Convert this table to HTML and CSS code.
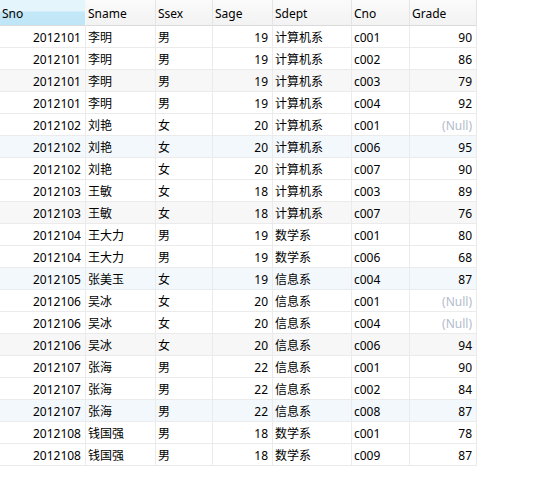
FILE: index.html
```html
<!DOCTYPE html>
<html lang="zh">
<head>
<meta charset="utf-8">
<title>Result</title>
<link rel="stylesheet" href="styles.css">
</head>
<body>
<div class="grid">
  <div class="row head">
    <div class="cell sel">Sno</div><div class="cell">Sname</div><div class="cell">Ssex</div><div class="cell">Sage</div><div class="cell">Sdept</div><div class="cell">Cno</div><div class="cell">Grade</div>
  </div>
  <div class="row"><div class="cell r">2012101</div><div class="cell">李明</div><div class="cell">男</div><div class="cell r">19</div><div class="cell">计算机系</div><div class="cell">c001</div><div class="cell r">90</div></div>
  <div class="row"><div class="cell r">2012101</div><div class="cell">李明</div><div class="cell">男</div><div class="cell r">19</div><div class="cell">计算机系</div><div class="cell">c002</div><div class="cell r">86</div></div>
  <div class="row gray"><div class="cell r">2012101</div><div class="cell">李明</div><div class="cell">男</div><div class="cell r">19</div><div class="cell">计算机系</div><div class="cell">c003</div><div class="cell r">79</div></div>
  <div class="row"><div class="cell r">2012101</div><div class="cell">李明</div><div class="cell">男</div><div class="cell r">19</div><div class="cell">计算机系</div><div class="cell">c004</div><div class="cell r">92</div></div>
  <div class="row"><div class="cell r">2012102</div><div class="cell">刘艳</div><div class="cell">女</div><div class="cell r">20</div><div class="cell">计算机系</div><div class="cell">c001</div><div class="cell r null">(Null)</div></div>
  <div class="row blue"><div class="cell r">2012102</div><div class="cell">刘艳</div><div class="cell">女</div><div class="cell r">20</div><div class="cell">计算机系</div><div class="cell">c006</div><div class="cell r">95</div></div>
  <div class="row"><div class="cell r">2012102</div><div class="cell">刘艳</div><div class="cell">女</div><div class="cell r">20</div><div class="cell">计算机系</div><div class="cell">c007</div><div class="cell r">90</div></div>
  <div class="row"><div class="cell r">2012103</div><div class="cell">王敏</div><div class="cell">女</div><div class="cell r">18</div><div class="cell">计算机系</div><div class="cell">c003</div><div class="cell r">89</div></div>
  <div class="row gray"><div class="cell r">2012103</div><div class="cell">王敏</div><div class="cell">女</div><div class="cell r">18</div><div class="cell">计算机系</div><div class="cell">c007</div><div class="cell r">76</div></div>
  <div class="row"><div class="cell r">2012104</div><div class="cell">王大力</div><div class="cell">男</div><div class="cell r">19</div><div class="cell">数学系</div><div class="cell">c001</div><div class="cell r">80</div></div>
  <div class="row"><div class="cell r">2012104</div><div class="cell">王大力</div><div class="cell">男</div><div class="cell r">19</div><div class="cell">数学系</div><div class="cell">c006</div><div class="cell r">68</div></div>
  <div class="row blue"><div class="cell r">2012105</div><div class="cell">张美玉</div><div class="cell">女</div><div class="cell r">19</div><div class="cell">信息系</div><div class="cell">c004</div><div class="cell r">87</div></div>
  <div class="row"><div class="cell r">2012106</div><div class="cell">吴冰</div><div class="cell">女</div><div class="cell r">20</div><div class="cell">信息系</div><div class="cell">c001</div><div class="cell r null">(Null)</div></div>
  <div class="row"><div class="cell r">2012106</div><div class="cell">吴冰</div><div class="cell">女</div><div class="cell r">20</div><div class="cell">信息系</div><div class="cell">c004</div><div class="cell r null">(Null)</div></div>
  <div class="row gray"><div class="cell r">2012106</div><div class="cell">吴冰</div><div class="cell">女</div><div class="cell r">20</div><div class="cell">信息系</div><div class="cell">c006</div><div class="cell r">94</div></div>
  <div class="row"><div class="cell r">2012107</div><div class="cell">张海</div><div class="cell">男</div><div class="cell r">22</div><div class="cell">信息系</div><div class="cell">c001</div><div class="cell r">90</div></div>
  <div class="row"><div class="cell r">2012107</div><div class="cell">张海</div><div class="cell">男</div><div class="cell r">22</div><div class="cell">信息系</div><div class="cell">c002</div><div class="cell r">84</div></div>
  <div class="row blue"><div class="cell r">2012107</div><div class="cell">张海</div><div class="cell">男</div><div class="cell r">22</div><div class="cell">信息系</div><div class="cell">c008</div><div class="cell r">87</div></div>
  <div class="row"><div class="cell r">2012108</div><div class="cell">钱国强</div><div class="cell">男</div><div class="cell r">18</div><div class="cell">数学系</div><div class="cell">c001</div><div class="cell r">78</div></div>
  <div class="row"><div class="cell r">2012108</div><div class="cell">钱国强</div><div class="cell">男</div><div class="cell r">18</div><div class="cell">数学系</div><div class="cell">c009</div><div class="cell r">87</div></div>
</div>
</body>
</html>
```
FILE: styles.css
```css
html, body {
  margin: 0;
  padding: 0;
  background: #ffffff;
}
body {
  font-family: "Noto Sans", "Noto Sans CJK SC", sans-serif;
  font-size: 12px;
  color: #000000;
}
.grid {
  width: 477px;
  display: flex;
  flex-direction: column;
}
.row {
  display: grid;
  grid-template-columns: 86px 70px 57px 60px 79px 58px 67px;
  grid-template-rows: 22px;
  height: 22px;
  background: #ffffff;
}
.row.gray { background: #f7f7f7; }
.row.blue { background: #f3f8fd; }
.cell {
  box-sizing: border-box;
  border-right: 1px solid #ebebeb;
  border-bottom: 1px solid #ebebeb;
  padding: 2px 3px 0 2px;
  line-height: 19px;
  white-space: nowrap;
  overflow: hidden;
}
.cell.r {
  text-align: right;
  padding: 2px 4px 0 2px;
}
.cell.null { color: #b3bccc; }
.head {
  height: 26px;
  grid-template-rows: 26px;
  background: linear-gradient(#fbfbfb, #f2f2f2);
}
.head .cell {
  line-height: 23px;
  padding: 2px 3px 0 2px;
  border-right: 1px solid #e4e4e4;
  border-bottom: 1px solid #dadada;
}
.head .cell.sel {
  background: linear-gradient(#e4f5fc 0, #e4f5fc 11px, #c3e8f8 12px, #bfe6f7 100%);
  border-right-color: #f2f9fc;
}
```
